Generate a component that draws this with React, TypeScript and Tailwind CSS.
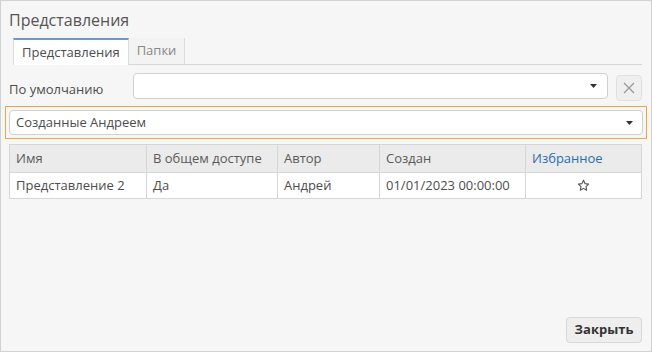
import React from 'react';

const font = { fontFamily: '"Open Sans", "Noto Sans", sans-serif' };

function Caret() {
  return (
    <svg width="7" height="4" viewBox="0 0 7 4" className="shrink-0">
      <path d="M0 0 L7 0 L3.5 4 Z" fill="#333" />
    </svg>
  );
}

function Star() {
  return (
    <svg width="13" height="13" viewBox="0 0 24 24" fill="none" stroke="#555" strokeWidth="2" strokeLinejoin="round">
      <path d="M12 2.5l2.9 6.1 6.6.8-4.9 4.6 1.3 6.6L12 17.3l-5.9 3.3 1.3-6.6-4.9-4.6 6.6-.8z" />
    </svg>
  );
}

export default function App() {
  const columns = [
    { title: 'Имя', w: 'w-[137px]' },
    { title: 'В общем доступе', w: 'w-[131px]' },
    { title: 'Автор', w: 'w-[102px]' },
    { title: 'Создан', w: 'w-[146px]' },
    { title: 'Избранное', w: 'flex-1', blue: true },
  ];
  const row = ['Представление 2', 'Да', 'Андрей', '01/01/2023 00:00:00'];

  return (
    <div
      style={font}
      className="w-[652px] h-[352px] bg-[#f6f6f6] border border-[#d2d2d2] flex flex-col pl-2 pr-[9px] text-[13px] text-[#4d4d4d]"
    >
      {/* заголовок */}
      <div className="pt-2 text-[16px] leading-[22px] text-[#555]">Представления</div>

      {/* вкладки */}
      <div className="mt-[7px] ml-1 flex border-b border-[#d6d6d6] h-[27px]">
        <div className="px-2 bg-white border-t-2 border-t-[#6c9ac8] border-x border-x-[#dcdcdc] flex items-center text-[#4d4d4d] -mb-px">
          Представления
        </div>
        <div className="px-2 bg-[#f3f3f3] border-r border-[#dcdcdc] flex items-center text-[#888]">Папки</div>
      </div>

      {/* по умолчанию */}
      <div className="mt-2 h-[26px] flex items-start">
        <div className="w-[124px] h-[26px] pt-[6px] leading-[20px]">По умолчанию</div>
        <div className="w-[476px] h-[26px] bg-white border border-[#d0d0d0] rounded-sm flex items-center justify-end pr-[10px]">
          <Caret />
        </div>
        <button className="ml-[8px] mt-[2px] w-[26px] h-[26px] bg-[#efefef] border border-[#e0e0e0] rounded-sm flex items-center justify-center">
          <svg width="12" height="12" viewBox="0 0 12 12" stroke="#999" strokeWidth="1.3">
            <path d="M1 1 L11 11 M11 1 L1 11" />
          </svg>
        </button>
      </div>

      {/* фильтр */}
      <div className="mt-[7px] -ml-1 -mr-[5px] border border-[#f2a53a] p-[3px]">
        <div className="h-[25px] bg-white border border-[#d0d0d0] rounded-sm flex items-center justify-between pl-[6px] pr-[9px]">
          <span>Созданные Андреем</span>
          <Caret />
        </div>
      </div>

      {/* таблица */}
      <div className="mt-[5px] border border-[#d6d6d6]">
        <div className="flex bg-[#ebebeb] h-[28px] border-b border-[#d6d6d6]">
          {columns.map((c, i) => (
            <div
              key={c.title}
              className={`${c.w} flex items-center pl-[6px] ${i < columns.length - 1 ? 'border-r border-[#d6d6d6]' : ''} ${c.blue ? 'text-[#2a6db0]' : 'text-[#5a5a5a]'}`}
            >
              {c.title}
            </div>
          ))}
        </div>
        <div className="flex bg-white h-[25px]">
          {row.map((v, i) => (
            <div key={i} className={`${columns[i].w} flex items-center pl-[6px] border-r border-[#d6d6d6]`}>
              {v}
            </div>
          ))}
          <div className="flex-1 flex items-center justify-center">
            <Star />
          </div>
        </div>
      </div>

      <div className="flex-1" />

      {/* нижняя панель */}
      <div className="flex justify-end mb-2">
        <button className="w-[76px] h-[26px] bg-[#eeeeee] border border-[#d8d8d8] rounded-sm font-bold text-[#333]">
          Закрыть
        </button>
      </div>
    </div>
  );
}
